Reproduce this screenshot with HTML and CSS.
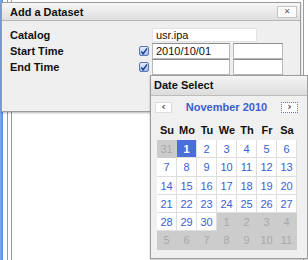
FILE: index.html
```html
<!doctype html>
<html lang="en">
    <head>
        <meta charset="UTF-8" />
        <title>Add a Dataset</title>
        <link rel="stylesheet" href="styles.css">
    </head>
    <body>
        <div class="backdrop">
            <div class="strip"></div>
            <div class="frame">
                <div class="frame-inner"></div>
            </div>
        </div>

        <div class="dialog">
            <div class="dialog-head">
                <span class="dialog-title">Add a Dataset</span>
                <button class="close-btn">&#x2715;</button>
            </div>
            <div class="dialog-body">
                <div class="row">
                    <label class="label">Catalog</label>
                    <span class="check-space"></span>
                    <input class="field field-wide" type="text" value="usr.ipa" />
                </div>
                <div class="row">
                    <label class="label">Start Time</label>
                    <span class="check">
                        <svg width="9" height="9" viewBox="0 0 9 9"><path d="M1.5 4.5 L3.5 7 L8 1" fill="none" stroke="#1f3f8f" stroke-width="1.6"/></svg>
                    </span>
                    <input class="field field-date" type="text" value="2010/10/01" />
                    <input class="field field-time" type="text" value="" />
                </div>
                <div class="row">
                    <label class="label">End Time</label>
                    <span class="check">
                        <svg width="9" height="9" viewBox="0 0 9 9"><path d="M1.5 4.5 L3.5 7 L8 1" fill="none" stroke="#1f3f8f" stroke-width="1.6"/></svg>
                    </span>
                    <input class="field field-date" type="text" value="" />
                    <input class="field field-time" type="text" value="" />
                </div>
            </div>
        </div>

        <div class="datepicker">
            <div class="dp-head">Date Select</div>
            <div class="dp-nav">
                <button class="nav-btn">&lsaquo;</button>
                <span class="dp-month">November 2010</span>
                <button class="nav-btn nav-focus">&rsaquo;</button>
            </div>
            <div class="dp-dows">
                <div class="dow">Su</div><div class="dow">Mo</div><div class="dow">Tu</div><div class="dow">We</div><div class="dow">Th</div><div class="dow">Fr</div><div class="dow">Sa</div>
            </div>
            <div class="dp-grid">
                <div class="day other">31</div><div class="day selected">1</div><div class="day">2</div><div class="day">3</div><div class="day">4</div><div class="day">5</div><div class="day">6</div>
                <div class="day">7</div><div class="day">8</div><div class="day">9</div><div class="day">10</div><div class="day">11</div><div class="day">12</div><div class="day">13</div>
                <div class="day">14</div><div class="day">15</div><div class="day">16</div><div class="day">17</div><div class="day">18</div><div class="day">19</div><div class="day">20</div>
                <div class="day">21</div><div class="day">22</div><div class="day">23</div><div class="day">24</div><div class="day">25</div><div class="day">26</div><div class="day">27</div>
                <div class="day">28</div><div class="day">29</div><div class="day">30</div><div class="day other">1</div><div class="day other">2</div><div class="day other">3</div><div class="day other">4</div>
                <div class="day other">5</div><div class="day other">6</div><div class="day other">7</div><div class="day other">8</div><div class="day other">9</div><div class="day other">10</div><div class="day other">11</div>
            </div>
        </div>
    </body>
</html>
```

FILE: styles.css
```css
* {
    margin: 0;
    padding: 0;
    box-sizing: border-box;
}
body {
    width: 308px;
    height: 260px;
    overflow: hidden;
    position: relative;
    background: #ffffff;
    font-family: "Liberation Sans", Arial, sans-serif;
    font-size: 11px;
    color: #222;
}

/* page behind the dialog */
.backdrop {
    display: flex;
    height: 260px;
}
.strip {
    width: 3px;
    background: linear-gradient(to right, #7fb0ee, #4d8be0);
}
.frame {
    flex: 1;
    margin-left: 4px;
    border-left: 1px solid #9a9a9a;
    padding-left: 3px;
    margin-right: 4px;
    border-right: 1px solid #9a9a9a;
}
.frame-inner {
    height: 100%;
    border-left: 1px solid #9a9a9a;
}

/* dialog */
.dialog {
    position: absolute;
    left: 1px;
    top: 2px;
    width: 300px;
    height: 110px;
    background: #efefef;
    border: 1px solid #9c9c9c;
    box-shadow: 0 1px 2px rgba(0, 0, 0, 0.3);
}
.dialog-head {
    display: flex;
    align-items: center;
    justify-content: space-between;
    height: 18px;
    padding: 0 3px 0 8px;
    background: linear-gradient(#f7f7f7, #dedede);
    border-bottom: 1px solid #b4b4b4;
}
.dialog-title {
    font-weight: bold;
    font-size: 11px;
    color: #111;
}
.close-btn {
    width: 20px;
    height: 12px;
    border: 1px solid #c4c4c4;
    background: #fbfbfb;
    color: #666;
    font-size: 8px;
    font-weight: bold;
    line-height: 10px;
    font-family: "DejaVu Sans", sans-serif;
}
.dialog-body {
    padding: 6px 0 0 8px;
}
.row {
    display: flex;
    align-items: center;
    height: 16px;
}
.label {
    width: 129px;
    font-weight: bold;
    color: #111;
}
.check-space {
    width: 13px;
}
.check {
    width: 10px;
    height: 10px;
    margin-right: 3px;
    border: 1px solid #5b78b4;
    border-radius: 2px;
    background: linear-gradient(#e6eefc, #9fbbef);
    display: flex;
    align-items: center;
    justify-content: center;
}
.field {
    height: 16px;
    border: 1px solid #b8b8b8;
    border-top-color: #8c8c8c;
    background: #ffffff;
    font-family: "Liberation Sans", Arial, sans-serif;
    font-size: 11px;
    padding: 0 3px;
    color: #111;
}
.field-wide {
    width: 105px;
    height: 14px;
    border-color: #e2e2e2;
}
.field-date {
    width: 78px;
}
.field-time {
    width: 50px;
    margin-left: 3px;
}

/* calendar popup */
.datepicker {
    position: absolute;
    left: 150px;
    top: 75px;
    width: 158px;
    height: 184px;
    background: #f0f0f0;
    border: 1px solid #9c9c9c;
    box-shadow: 0 1px 2px rgba(0, 0, 0, 0.25);
}
.dp-head {
    height: 20px;
    line-height: 19px;
    padding-left: 3px;
    font-weight: bold;
    color: #111;
    background: linear-gradient(#f5f5f5, #dcdcdc);
    border-bottom: 1px solid #bdbdbd;
}
.dp-nav {
    display: flex;
    align-items: center;
    justify-content: space-between;
    padding: 0 9px 0 4px;
    height: 22px;
}
.nav-btn {
    width: 17px;
    height: 11px;
    border: 1px solid #dcdcdc;
    background: #ffffff;
    color: #555;
    font-size: 11px;
    line-height: 8px;
    font-weight: bold;
    font-family: "DejaVu Sans", sans-serif;
}
.nav-focus {
    border: 1px dotted #6a6ac8;
}
.dp-month {
    color: #3a5fd0;
    font-weight: bold;
}
.dp-dows {
    display: grid;
    grid-template-columns: repeat(7, 20px);
    margin-left: 6px;
    height: 22px;
    align-items: end;
    padding-bottom: 3px;
}
.dow {
    font-weight: bold;
    color: #111;
    text-align: center;
    line-height: 13px;
}
.dp-grid {
    display: grid;
    grid-template-columns: repeat(7, 20px);
    grid-auto-rows: 18.3px;
    margin-left: 6px;
}
.day {
    text-align: center;
    line-height: 18px;
    color: #3a5fd0;
    background: #ffffff;
    border-right: 1px solid #dedede;
    border-bottom: 1px solid #dedede;
}
.day.other {
    background: #cccccc;
    color: #a9a9a9;
    border-color: #cccccc;
}
.day.selected {
    background: #4a6fdb;
    color: #ffffff;
    font-weight: bold;
}
```
